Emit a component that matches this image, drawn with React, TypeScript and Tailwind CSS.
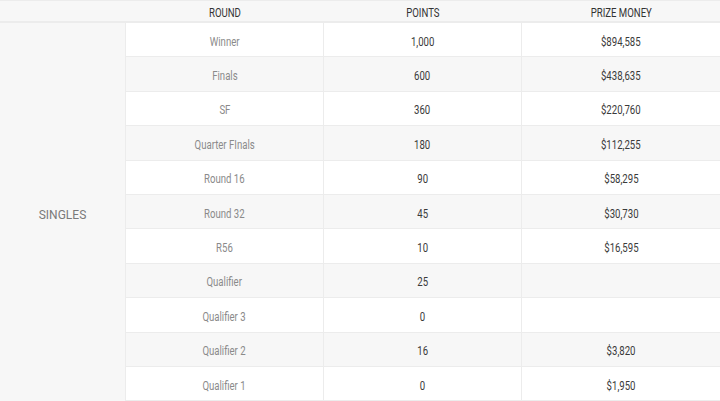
import React from "react"

const rows = [
  { round: "Winner", points: "1,000", prize: "$894,585" },
  { round: "Finals", points: "600", prize: "$438,635" },
  { round: "SF", points: "360", prize: "$220,760" },
  { round: "Quarter FInals", points: "180", prize: "$112,255" },
  { round: "Round 16", points: "90", prize: "$58,295" },
  { round: "Round 32", points: "45", prize: "$30,730" },
  { round: "R56", points: "10", prize: "$16,595" },
  { round: "Qualifier", points: "25", prize: "" },
  { round: "Qualifier 3", points: "0", prize: "" },
  { round: "Qualifier 2", points: "16", prize: "$3,820" },
  { round: "Qualifier 1", points: "0", prize: "$1,950" },
]

function Narrow({ children }: { children: React.ReactNode }) {
  return <span className="inline-block scale-x-[0.8] whitespace-nowrap">{children}</span>
}

export default function App() {
  return (
    <div className="h-[401px] w-[720px] overflow-hidden bg-white font-['Roboto',sans-serif] text-[12px]">
      {/* Header */}
      <div className="flex h-[23px] border-t border-b-2 border-[#ececec] bg-[#f7f7f7] pt-[4px] text-[#333]">
        <div className="w-[126px]" />
        <div className="flex w-[198px] items-center justify-center">
          <Narrow>ROUND</Narrow>
        </div>
        <div className="flex w-[198px] items-center justify-center">
          <Narrow>POINTS</Narrow>
        </div>
        <div className="flex w-[198px] items-center justify-center">
          <Narrow>PRIZE MONEY</Narrow>
        </div>
      </div>

      {/* Body */}
      <div className="flex">
        <div className="flex w-[126px] shrink-0 items-center justify-center border-r border-[#ececec] bg-[#f7f7f7] pt-[5px] text-[#7a7a7a]">
          SINGLES
        </div>
        <div className="flex-1">
          {rows.map((row, i) => (
            <div
              key={row.round}
              className={`grid h-[34.4px] grid-cols-[198px_198px_1fr] border-b border-[#ececec] ${
                i % 2 === 1 ? "bg-[#f7f7f7]" : "bg-white"
              }`}
            >
              <div className="flex items-center justify-center border-r border-[#ececec] pt-[4px] text-[#8a8a8a]">
                <Narrow>{row.round}</Narrow>
              </div>
              <div className="flex items-center justify-center border-r border-[#ececec] pt-[4px] text-[#3a3a3a]">
                <Narrow>{row.points}</Narrow>
              </div>
              <div className="flex items-center justify-center pt-[4px] text-[#3a3a3a]">
                <Narrow>{row.prize}</Narrow>
              </div>
            </div>
          ))}
        </div>
      </div>
    </div>
  )
}
